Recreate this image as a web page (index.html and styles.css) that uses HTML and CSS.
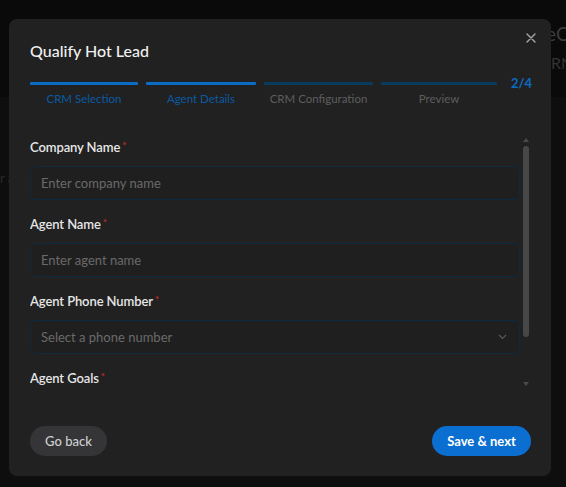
FILE: index.html
```html
<!DOCTYPE html>
<html lang="en">
<head>
<meta charset="utf-8">
<title>Qualify Hot Lead</title>
<link rel="stylesheet" href="styles.css">
</head>
<body>
<div class="page">
  <header class="page-head">
    <div class="page-title">eC</div>
    <div class="page-sub">RN</div>
  </header>
  <main class="page-main">
    <div class="page-ghost">r a</div>
  </main>
</div>

<div class="modal" role="dialog" aria-labelledby="mtitle">
  <button class="close" aria-label="Close">
    <svg width="10" height="10" viewBox="0 0 10 10"><path d="M1 1L9 9M9 1L1 9" stroke="#a8a8a8" stroke-width="1.4" stroke-linecap="round"/></svg>
  </button>
  <h2 class="title" id="mtitle">Qualify Hot Lead</h2>

  <div class="stepper">
    <div class="steps">
      <div class="step done"><span class="bar"></span><span class="label">CRM Selection</span></div>
      <div class="step done"><span class="bar"></span><span class="label">Agent Details</span></div>
      <div class="step"><span class="bar"></span><span class="label">CRM Configuration</span></div>
      <div class="step"><span class="bar"></span><span class="label">Preview</span></div>
    </div>
    <div class="count">2/4</div>
  </div>

  <div class="body">
    <form class="form">
      <div class="field">
        <label class="flabel">Company Name<span class="req">*</span></label>
        <div class="input">Enter company name</div>
      </div>
      <div class="field">
        <label class="flabel">Agent Name<span class="req">*</span></label>
        <div class="input">Enter agent name</div>
      </div>
      <div class="field">
        <label class="flabel">Agent Phone Number<span class="req">*</span></label>
        <div class="input select">Select a phone number
          <svg class="chev" width="9" height="6" viewBox="0 0 9 6"><path d="M1 1L4.5 4.5L8 1" fill="none" stroke="#5a5a5a" stroke-width="1.1"/></svg>
        </div>
      </div>
      <div class="field">
        <label class="flabel">Agent Goals<span class="req">*</span></label>
        <div class="input area"></div>
      </div>
    </form>
    <div class="scrollbar">
      <span class="arrow up"></span>
      <span class="thumb"></span>
      <span class="track"></span>
      <span class="arrow down"></span>
    </div>
  </div>

  <div class="footer">
    <button class="btn back">Go back</button>
    <button class="btn next">Save &amp; next</button>
  </div>
</div>
</body>
</html>
```

FILE: styles.css
```css
* { box-sizing: border-box; }
html, body { margin: 0; padding: 0; }
body {
  width: 566px;
  height: 487px;
  overflow: hidden;
  background: #0b0b0b;
  font-family: Lato, "Open Sans", sans-serif;
}

.page { height: 487px; display: flex; flex-direction: column; }
.page-head {
  height: 97px;
  background: #0a0a0a;
  padding: 22px 0 0 546px;
  white-space: nowrap;
}
.page-title { font-size: 19px; color: #3c3c3c; line-height: 24px; }
.page-sub { font-size: 16px; color: #333; line-height: 22px; margin-top: 6px; padding-left: 5px; }
.page-main { flex: 1; background: #0e0e0e; padding: 73px 0 0 0; }
.page-ghost { font-size: 13px; color: #2a2a2a; line-height: 16px; }

.modal {
  position: absolute;
  left: 9px;
  top: 19px;
  width: 542px;
  height: 457px;
  background: #212121;
  border-radius: 8px;
  padding: 21px 20px 20px 21px;
  display: flex;
  flex-direction: column;
}
.close {
  position: absolute;
  top: 14px;
  right: 15px;
  background: none;
  border: 0;
  padding: 0;
  width: 10px;
  height: 10px;
  display: flex;
}
.title {
  margin: 0;
  font-size: 16px;
  font-weight: 500;
  color: #f0f0f0;
  line-height: 22px;
}

.stepper {
  display: flex;
  align-items: flex-start;
  gap: 14px;
  margin-top: 20px;
}
.steps {
  flex: 1;
  display: grid;
  grid-template-columns: 108px 110px 109px 116px;
  column-gap: 8px;
}
.step { display: flex; flex-direction: column; align-items: center; }
.bar { display: block; width: 100%; height: 3px; background: #0b3a5f; border-radius: 1px; }
.step.done .bar { background: #0a6cc4; }
.label { font-size: 11.5px; line-height: 14px; margin-top: 7px; color: #5e5e5e; white-space: nowrap; }
.step.done .label { color: #0a5aa3; }
.count { font-size: 13px; font-weight: 700; color: #0a6cc4; line-height: 14px; margin-top: -6px; }

.body {
  margin-top: 19px;
  height: 262px;
  display: flex;
  gap: 1px;
  overflow: hidden;
}
.form { flex: 1; padding-top: 12px; margin: 0; }
.field { display: flex; flex-direction: column; margin-bottom: 14px; }
.flabel {
  font-size: 13px;
  font-weight: 600;
  color: #e6e6e6;
  line-height: 20px;
  height: 20px;
  margin-bottom: 9px;
  letter-spacing: -0.1px;
}
.req { color: #c72b2f; font-size: 10px; line-height: 0; vertical-align: 3px; margin-left: 2px; }
.input {
  height: 34px;
  flex: none;
  border: 1px solid #0d2a3e;
  border-radius: 6px;
  background: #1f1f1f;
  color: #6a6a6a;
  font-size: 13px;
  padding: 0 10px;
  display: flex;
  align-items: center;
}
.select { justify-content: space-between; padding-right: 12px; }
.area { height: 80px; }

.scrollbar {
  width: 10px;
  display: flex;
  flex-direction: column;
  align-items: center;
  padding: 13px 0 1px;
}
.arrow { width: 0; height: 0; border-left: 3.5px solid transparent; border-right: 3.5px solid transparent; }
.arrow.up { border-bottom: 4px solid #4a4a4a; }
.arrow.down { border-top: 4px solid #4a4a4a; }
.thumb { width: 6px; height: 191px; background: #474747; border-radius: 3px; margin-top: 4px; }
.track { flex: 1; }

.footer {
  margin-top: auto;
  display: flex;
  justify-content: space-between;
  align-items: center;
}
.btn {
  height: 30px;
  border: 0;
  border-radius: 15px;
  font-family: Lato, "Open Sans", sans-serif;
  font-size: 13px;
  padding: 0;
}
.back { width: 77px; background: #353537; color: #cfcfcf; font-weight: 500; }
.next { width: 99px; background: #0a6fd0; color: #ffffff; font-weight: 700; }
```
